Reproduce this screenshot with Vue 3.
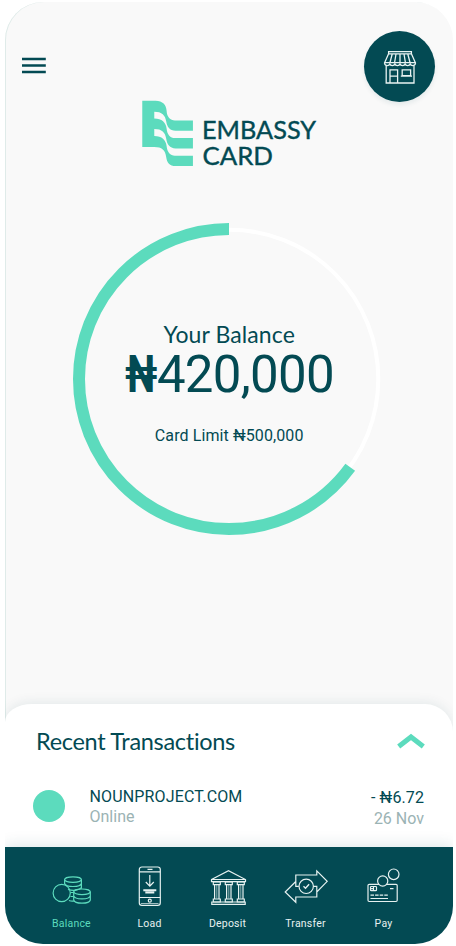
<script setup>
const tabs = [
  { id: 'balance', label: 'Balance' },
  { id: 'load', label: 'Load' },
  { id: 'deposit', label: 'Deposit' },
  { id: 'transfer', label: 'Transfer' },
  { id: 'pay', label: 'Pay' },
]
const columns = [13.8, 25.8, 37.8]
const active = 'balance'
const transactions = [
  { merchant: 'NOUNPROJECT.COM', channel: 'Online', amount: '- ₦6.72', date: '26 Nov' },
]

const radius = 150
const circumference = 2 * Math.PI * radius
const arc = `${circumference * 0.6495} ${circumference}`
</script>

<template>
  <div class="phone">
    <header class="top">
      <button class="menu" aria-label="Menu">
        <svg width="24" height="17" viewBox="0 0 24 17" stroke="#034a53" stroke-width="2.3"><path d="M0 2h23.800M0 8.500h23.800M0 15h23.800" /></svg>
      </button>
      <button class="store" aria-label="Store">
        <svg width="34" height="34" viewBox="0 0 34 34" fill="none" stroke="#e9f3f2" stroke-width="1.300">
          <path d="M5.600 1.600h22.800v2.200H5.600zM5.600 3.800 1.700 12.600h30.600L28.400 3.800M9.200 4 7 12.500M13 4l-1.400 8.500M17 4v8.500M21 4l1.400 8.500M24.800 4l2.200 8.500" />
          <path d="M1.700 12.600v1.400a2.600 2 0 0 0 5.100 0a2.600 2 0 0 0 5.100 0a2.600 2 0 0 0 5.100 0a2.600 2 0 0 0 5.100 0a2.600 2 0 0 0 5.100 0a2.600 2 0 0 0 5.100 0v-1.400" />
          <path d="M3.200 16v17h27.800V16M7 33V19.800h7.600V33M7 26.200h7.600M19.200 19.800h8.400v5.800h-8.400zM17.800 26.200h11.200" />
        </svg>
      </button>
    </header>

    <div class="brand">
      <svg width="51" height="66" viewBox="426.200 298.700 153 198" fill="#5cdbbd">
        <path d="M427 301H467C488 301 499 314 500 331C501 350 511 360 525 360H579V391H527C509 391 501 378 499 364C496 344 486 334 463 334V354C486 354 498 366 500 384C502 403 511 413 525 413H579V444H527C509 444 501 431 499 416C496 396 486 386 463 386V407C486 407 498 419 500 437C502 456 511 466 525 466H579V497H527C509 497 501 486 499 471C496 449 486 440 463 440H427Z" />
      </svg>
      <svg class="wordmark" width="116" height="50" viewBox="0 0 116 50">
        <text x="-1" y="21.600" textLength="114" lengthAdjust="spacingAndGlyphs">EMBASSY</text>
        <text x="-.500" y="48.200" textLength="70.500" lengthAdjust="spacingAndGlyphs">CARD</text>
      </svg>
    </div>

    <section class="gauge">
      <svg class="ring" width="314" height="314" viewBox="-157 -157 314 314" fill="none">
        <circle r="149.300" stroke="#fff" stroke-width="4" />
        <circle :r="radius" stroke="#5cdbbd" stroke-width="12" :stroke-dasharray="arc" transform="scale(-1 1) rotate(-90)" />
      </svg>
      <div class="figures">
        <div class="caption">Your Balance</div>
        <div class="amount"><b>₦</b><span>420,000</span></div>
        <div class="limit">Card Limit ₦500,000</div>
      </div>
    </section>

    <section class="sheet">
      <div class="sheet-head">
        <h2>Recent Transactions</h2>
        <svg width="28" height="16" viewBox="0 0 28 16" fill="none" stroke="#5cdbbd" stroke-width="5"><path d="M1.700 13.500 14 4 26.300 13.500" /></svg>
      </div>
      <div v-for="t in transactions" :key="t.merchant" class="row">
        <span class="dot"></span>
        <div class="what"><div class="merchant">{{ t.merchant }}</div><div class="muted">{{ t.channel }}</div></div>
        <div class="howmuch"><div class="value">{{ t.amount }}</div><div class="muted date">{{ t.date }}</div></div>
      </div>
    </section>

    <nav class="tabs">
      <div v-for="tab in tabs" :key="tab.id" class="tab" :class="{ active: tab.id === active }">
        <svg width="48" height="48" viewBox="0 0 48 48" fill="none" stroke="currentColor" stroke-width="1.200">
          <g v-if="tab.id === 'balance'">
            <ellipse cx="26" cy="15.600" rx="8.400" ry="2.800" />
            <path d="M17.600 15.600v4.200M34.400 15.600v9.200M17.600 19.500c1 4 15.800 4 16.800 0M21 25.500c5 1.500 11 1 13.400-1.800M23.500 28.500h3M23.500 32.500h3M22 36.500c2 .8 3.500.8 5 .5" />
            <circle cx="14.700" cy="29" r="8.600" />
            <ellipse cx="35" cy="27.800" rx="8.300" ry="2.800" />
            <path d="M26.700 27.800v8.200c1 4.200 15.600 4.200 16.600 0v-8.200M26.700 31.800c1 4 15.600 4 16.600 0" />
          </g>
          <g v-else-if="tab.id === 'load'">
            <rect x="14.300" y="3" width="21" height="38.400" rx="2.600" />
            <path d="M14.300 7.800h21M14.300 33.500h21M22.500 5.400h5M24.800 11v11M20.800 18l4 4.200 4-4.200" />
            <path d="M18.300 26.200h13M20.300 28.600h9" stroke-width="2" />
            <circle cx="24.800" cy="36.700" r="1.500" /><path d="M16 39.500h17.500" stroke-width=".7" />
          </g>
          <g v-else-if="tab.id === 'deposit'">
            <path d="M8.500 15.500 25.500 6.700 42.500 15.500v2.200h-34zM8.500 15.500h34" />
            <g v-for="x in columns" :key="x" :transform="`translate(${x} 0)`">
              <path d="M-3.500 18h7v2.600h-7zM-2.200 20.600v14M2.200 20.600v14M-3.500 35h7v3h-7z" /><path d="M0 21v13.500" stroke-width=".6" />
            </g>
            <path d="M8.800 38h33.400v2.400H8.800z" />
          </g>
          <g v-else-if="tab.id === 'transfer'">
            <path d="M17.800 22.300h-3V11h21V6.900L46.200 17.300 35.800 28v-5.700h-3.200M14.800 17.500 4.200 28l10.600 10.300V33h21v-5" />
            <circle cx="25.200" cy="22.300" r="7.200" /><path d="m22.500 22.300 2 2 3.600-4" stroke-width="1.400" />
          </g>
          <g v-else>
            <rect x="9" y="20.300" width="29.200" height="17.200" rx="1.200" />
            <circle class="coin" cx="23.700" cy="17" r="5.100" /><circle cx="34.700" cy="10.300" r="5.300" />
            <rect x="11.500" y="22.500" width="6" height="4.200" rx=".8" /><path d="M14.500 22.500v4.200M11.500 24.600h3M31 24.700h3.500" />
            <path d="M11.500 31.200h17.500" stroke-dasharray="3.500 1.100" /><path d="M11.500 34.500h17.500" />
          </g>
        </svg>
        <span>{{ tab.label }}</span>
      </div>
    </nav>
  </div>
</template>

<style>
body { margin: 0; background: #fff; }
</style>

<style scoped>
.phone {
  box-sizing: border-box;
  width: 448px;
  height: 942px;
  margin: 2px 0 0 5px;
  display: flex;
  flex-direction: column;
  overflow: hidden;
  border-radius: 38px;
  background: #f9f9f9;
  box-shadow: inset 1px 0 #dfebe9;
  color: #034a53;
  font-family: Roboto, sans-serif;
}
button { border: 0; padding: 0; background: none; }
.top {
  display: flex;
  justify-content: space-between;
  align-items: flex-start;
  padding: 29px 18px 0 17px;
}
.menu { display: flex; margin-top: 26px; }
.store {
  display: grid;
  place-items: center;
  width: 71px;
  height: 71px;
  border-radius: 50%;
  background: #034a53;
  box-shadow: 0 3px 4px #034a5314;
}
.brand { display: flex; gap: 10px; margin: -2px 0 0 137px; height: 67px; }
.brand svg { overflow: visible; }
.wordmark { margin-top: 17px; font: 400 25.500px Lato, sans-serif; fill: #034a53; stroke: #034a53; stroke-width: .4; }
.gauge { display: grid; width: 314px; margin: 55px 0 0 67.200px; }
.ring, .figures { grid-area: 1 / 1; }
.figures { text-align: center; padding-top: 98px; }
.caption { font: 23px/28px Lato, sans-serif; letter-spacing: .1px; }
.amount { display: flex; justify-content: center; align-items: baseline; height: 51px; line-height: 54px; font-size: 51px; margin-left: 1px; }
.amount b { width: 31.500px; font-weight: 700; transform: scaleX(.78); transform-origin: 0 50%; }
.amount span { letter-spacing: -.7px; }
.limit { margin-top: 27px; font-size: 16px; line-height: 20px; letter-spacing: .1px; }
.sheet {
  margin-top: auto;
  height: 143px;
  flex: none;
  background: #fff;
  border-radius: 27px 28px 0 0 / 18px 28px 0 0;
  box-shadow: 0 -2px 12px #034a5316;
}
.sheet-head { display: flex; justify-content: space-between; padding: 22px 28px 0 31px; }
.sheet-head svg { margin-top: 7px; }
h2 { margin: 0; font: 23.500px/30px Lato, sans-serif; letter-spacing: -.3px; font-variant-ligatures: none; }
.row { display: flex; padding: 30px 29px 0 28px; font-size: 16px; line-height: 20px; }
.dot { width: 32px; height: 32px; margin-top: 4px; border-radius: 50%; background: #5cdbbd; }
.what { margin: 1px 0 0 24.500px; }
.merchant { letter-spacing: .15px; }
.howmuch { margin: 2px 0 0 auto; text-align: right; }
.value { letter-spacing: .1px; }
.muted { color: #9bb3b4; }
.date { line-height: 21px; }
.tabs {
  position: relative;
  flex: none;
  display: flex;
  box-sizing: border-box;
  height: 97px;
  padding: 17px 0 0 27px;
  background: #034a53;
  box-shadow: 0 -2px 14px #034a5322;
}
.tab { display: flex; flex-direction: column; align-items: center; width: 78px; color: #e6f1f0; font-size: 10.500px; }
.tab span { margin: 5px 0 0 1px; line-height: 14px; letter-spacing: .2px; }
.tab.active { color: #5cdbbd; }
.coin { fill: #034a53; }
</style>
